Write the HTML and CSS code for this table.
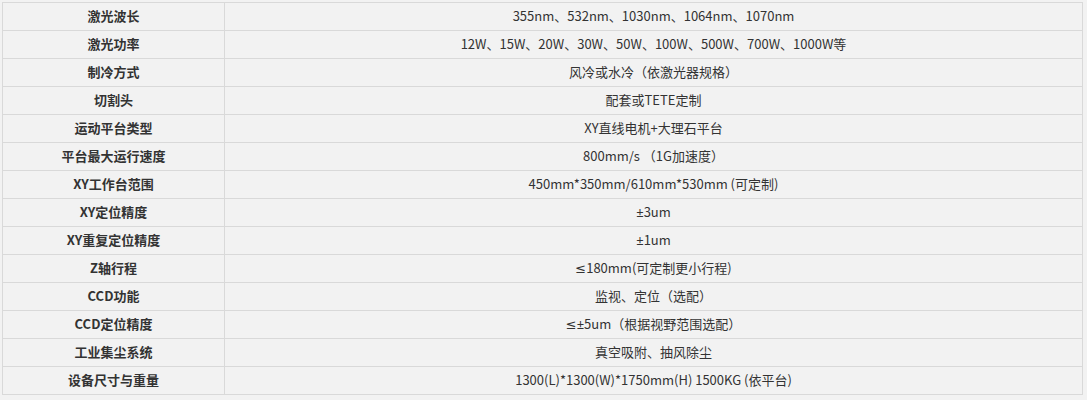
FILE: index.html
```html
<!DOCTYPE html>
<html lang="zh">
<head>
<meta charset="utf-8">
<link rel="stylesheet" href="styles.css">
</head>
<body>
<table class="spec">
<tbody>
<tr><td class="k">激光波长</td><td class="v">355nm、532nm、1030nm、1064nm、1070nm</td></tr>
<tr><td class="k">激光功率</td><td class="v">12W、15W、20W、30W、50W、100W、500W、700W、1000W等</td></tr>
<tr><td class="k">制冷方式</td><td class="v">风冷或水冷（依激光器规格）</td></tr>
<tr><td class="k">切割头</td><td class="v">配套或TETE定制</td></tr>
<tr><td class="k">运动平台类型</td><td class="v">XY直线电机+大理石平台</td></tr>
<tr><td class="k">平台最大运行速度</td><td class="v">800mm/s （1G加速度）</td></tr>
<tr><td class="k">XY工作台范围</td><td class="v">450mm*350mm/610mm*530mm (可定制)</td></tr>
<tr><td class="k">XY定位精度</td><td class="v"><span class="sym">±</span>3um</td></tr>
<tr><td class="k">XY重复定位精度</td><td class="v"><span class="sym">±</span>1um</td></tr>
<tr><td class="k">Z轴行程</td><td class="v"><span class="sym">≤</span>180mm(可定制更小行程)</td></tr>
<tr><td class="k">CCD功能</td><td class="v">监视、定位（选配）</td></tr>
<tr><td class="k">CCD定位精度</td><td class="v"><span class="sym">≤±</span>5um（根据视野范围选配）</td></tr>
<tr><td class="k">工业集尘系统</td><td class="v">真空吸附、抽风除尘</td></tr>
<tr><td class="k">设备尺寸与重量</td><td class="v">1300(L)*1300(W)*1750mm(H) 1500KG (依平台)</td></tr>
</tbody>
</table>
</body>
</html>
```

FILE: styles.css
```css
html, body {
  margin: 0;
  padding: 0;
  background: #f2f2f2;
}
body {
  padding: 2px;
  font-family: "Microsoft YaHei", "Noto Sans CJK SC", "Noto Sans", sans-serif;
  font-size: 13px;
  color: #333;
}
.spec {
  width: 1081px;
  border-collapse: collapse;
  table-layout: fixed;
}
.spec td {
  border: 1px solid #d9d9d9;
  height: 26px;
  padding: 0 0 1px 0;
  text-align: center;
  vertical-align: middle;
  line-height: 18px;
  white-space: nowrap;
}
.spec .k {
  width: 221px;
  font-weight: bold;
}
.spec .sym {
  font-family: "Noto Sans", "DejaVu Sans", sans-serif;
}
```
